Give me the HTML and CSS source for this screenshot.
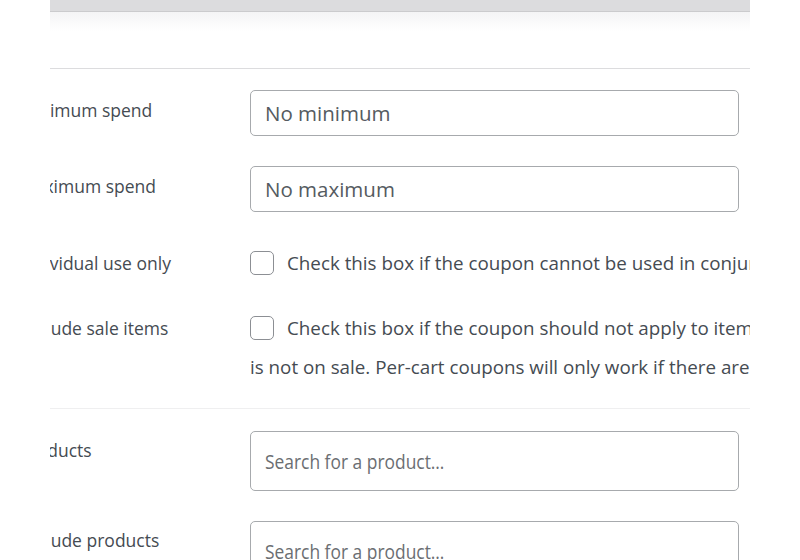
FILE: index.html
```html
<!DOCTYPE html>
<html>
<head>
<meta charset="utf-8">
<link rel="stylesheet" href="styles.css">
</head>
<body>
<div class="panel">
  <div class="topbar"></div>
  <div class="shade"></div>
  <div class="section first">
    <div class="row field-row">
      <label class="label">Minimum spend</label>
      <div class="input"><span class="value">No minimum</span></div>
    </div>
    <div class="row field-row second">
      <label class="label">Maximum spend</label>
      <div class="input"><span class="value">No maximum</span></div>
    </div>
    <div class="row check-row">
      <label class="label">Individual use only</label>
      <div class="desc"><span class="box"></span>Check this box if the coupon cannot be used in conjunction with other coupons.</div>
    </div>
    <div class="row check-row">
      <label class="label">Exclude sale items</label>
      <div class="desc"><span class="box"></span>Check this box if the coupon should not apply to items on sale. Per-item coupons will only work if the item<br>is not on sale. Per-cart coupons will only work if there are items in the cart that are not on sale.</div>
    </div>
  </div>
  <div class="section">
    <div class="row search-row">
      <label class="label">Products</label>
      <div class="input tall"><span class="search">Search for a product…</span></div>
    </div>
    <div class="row search-row">
      <label class="label">Exclude products</label>
      <div class="input tall"><span class="search">Search for a product…</span></div>
    </div>
  </div>
</div>
</body>
</html>
```
FILE: styles.css
```css
html, body {
  margin: 0;
  padding: 0;
  background: #ffffff;
}
body {
  font-family: "Open Sans", "Noto Sans", sans-serif;
  color: #3c434a;
}
.panel {
  width: 700px;
  height: 560px;
  margin-left: 50px;
  overflow: hidden;
}
.topbar {
  height: 11px;
  background: #dcdcde;
  border-bottom: 1px solid #cbcbcd;
}
.shade {
  height: 20px;
  background: linear-gradient(#f4f4f5, #fbfbfb 60%, #ffffff);
}
.section {
  border-top: 1px solid #dcdcde;
  margin-top: 36px;
  padding-top: 21px;
}
.section.first + .section {
  margin-top: 0;
  border-top: 1px solid #efeff0;
  padding-top: 22px;
}
.section.first {
  padding-bottom: 21px;
}
.row {
  display: flex;
  margin-left: -31px;
}
.label {
  flex: 0 0 231px;
  font-size: 17.5px;
  line-height: 24px;
  color: #454b52;
  white-space: nowrap;
}
.field-row .label {
  padding-top: 8px;
}
.field-row {
  margin-bottom: 30px;
}
.field-row.second {
  margin-bottom: 32px;
}
.input {
  box-sizing: border-box;
  width: 489px;
  height: 46px;
  border: 1.5px solid #a7aaad;
  border-radius: 5px;
  padding-left: 14px;
  display: flex;
  align-items: center;
  flex: 0 0 auto;
}
.value {
  font-size: 20.5px;
  color: #555b61;
}
.check-row .label {
  line-height: 39px;
}
.check-row {
  margin-bottom: 26px;
}
.check-row:last-child {
  margin-bottom: 0;
}
.desc {
  font-size: 18.8px;
  line-height: 39px;
  white-space: nowrap;
  color: #454b52;
}
.box {
  display: inline-block;
  box-sizing: border-box;
  width: 24px;
  height: 24px;
  border: 1.5px solid #8c8f94;
  border-radius: 5px;
  vertical-align: -5px;
  margin-right: 13px;
  background: #fff;
}
.search-row {
  margin-bottom: 30px;
}
.search-row .label {
  padding-top: 7px;
}
.input.tall {
  height: 60px;
}
.search {
  display: inline-block;
  font-size: 20px;
  color: #6b6e72;
  transform: scaleX(0.87);
  transform-origin: left center;
  white-space: nowrap;
}
```
